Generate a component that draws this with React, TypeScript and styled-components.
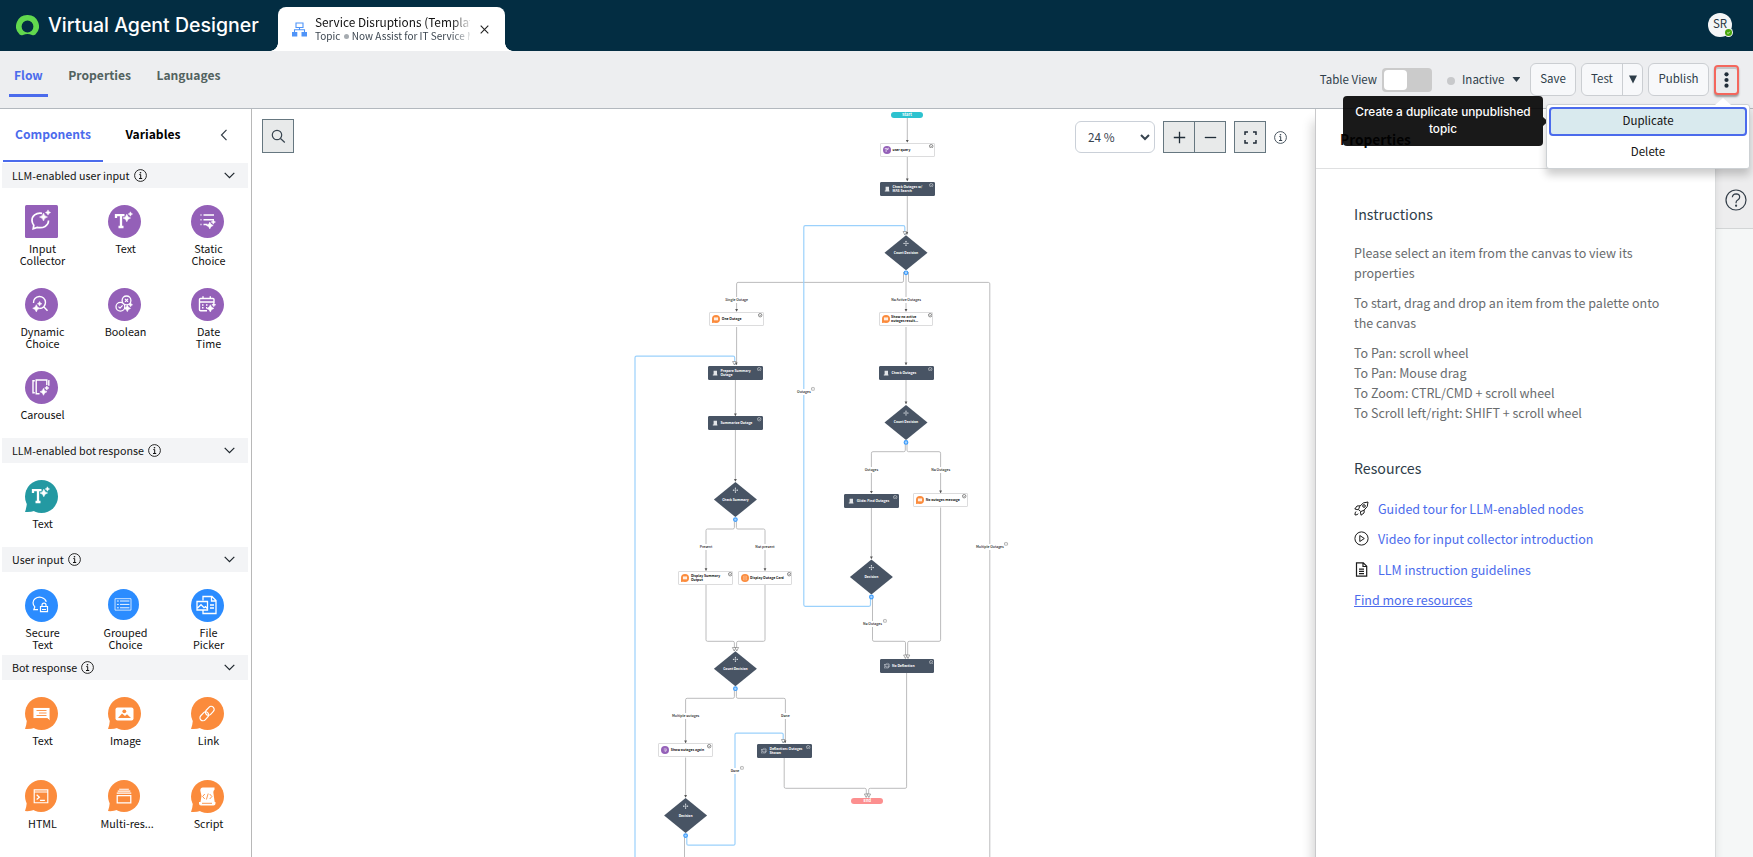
import type { ReactNode } from 'react';
import styled, { createGlobalStyle } from 'styled-components';

type Kind = 'round' | 'square' | 'bubble';
type PaletteEntry = { label: string; glyph: string; size?: number };
type CardData = { x: number; y: number; text: string; dark?: boolean; icon: 'query' | 'message' | 'script' | 'topic' | 'card' | 'choice' };

const purple = '#9460b8';
const teal = '#2399a2';
const blue = '#2b8cff';
const orange = '#fb8b3c';

const sections: { title: string; color: string; kind: Kind; items: PaletteEntry[] }[] = [
  {
    title: 'LLM-enabled user input', color: purple, kind: 'round',
    items: [
      { label: 'Input Collector', glyph: 'collector' },
      { label: 'Text', glyph: 'llmText' },
      { label: 'Static Choice', glyph: 'static' },
      { label: 'Dynamic Choice', glyph: 'dynamic' },
      { label: 'Boolean', glyph: 'boolean' },
      { label: 'Date Time', glyph: 'date' },
      { label: 'Carousel', glyph: 'carousel' },
    ],
  },
  { title: 'LLM-enabled bot response', color: teal, kind: 'bubble', items: [{ label: 'Text', glyph: 'llmText' }] },
  {
    title: 'User input', color: blue, kind: 'round',
    items: [
      { label: 'Secure Text', glyph: 'secure' },
      { label: 'Grouped Choice', glyph: 'grouped', size: 31 },
      { label: 'File Picker', glyph: 'file' },
    ],
  },
  {
    title: 'Bot response', color: orange, kind: 'bubble',
    items: [
      { label: 'Text', glyph: 'message' },
      { label: 'Image', glyph: 'image' },
      { label: 'Link', glyph: 'link' },
      { label: 'HTML', glyph: 'html', size: 32 },
      { label: 'Multi\u2011res...', glyph: 'multi', size: 32 },
      { label: 'Script', glyph: 'script' },
    ],
  },
];

const cards: CardData[] = [
  { x: 880, y: 143, text: 'user query', icon: 'query' },
  { x: 880, y: 182, text: 'Check Outages w/\nMAS Search', icon: 'script', dark: true },
  { x: 709.3, y: 312.4, text: 'One Outage', icon: 'message' },
  { x: 878.6, y: 312.4, text: 'Show no active\noutages result...', icon: 'message' },
  { x: 708, y: 365.7, text: 'Prepare Summary\nOutage', icon: 'script', dark: true },
  { x: 879, y: 365.7, text: 'Check Outages', icon: 'script', dark: true },
  { x: 708, y: 416.3, text: 'Summarize Outage', icon: 'script', dark: true },
  { x: 844.2, y: 493.7, text: 'Glide: Find Outages', icon: 'script', dark: true },
  { x: 913.3, y: 493.4, text: 'No outages message', icon: 'message' },
  { x: 678.4, y: 571.2, text: 'Display Summary\nOutput', icon: 'message' },
  { x: 737.5, y: 571.2, text: 'Display Outage Card', icon: 'card' },
  { x: 879.5, y: 658.8, text: 'No Deflection', icon: 'topic', dark: true },
  { x: 658.3, y: 743.3, text: 'Show outages again', icon: 'choice' },
  { x: 757, y: 743.8, text: 'Deflection: Outages\nShown', icon: 'topic', dark: true },
];

const decisions = [
  { x: 906, y: 252.8, text: 'Count Decision' },
  { x: 906, y: 422.4, text: 'Count Decision' },
  { x: 735.4, y: 499.6, text: 'Check Summary' },
  { x: 871.4, y: 577, text: 'Decision' },
  { x: 735.4, y: 668.7, text: 'Count Decision' },
  { x: 685.6, y: 815.6, text: 'Decision' },
];

const edgeLabels = [
  { x: 736.6, y: 300, text: 'Single Outage' },
  { x: 906, y: 300, text: 'No Active Outages' },
  { x: 803.8, y: 391.8, text: 'Outages', icon: 813 },
  { x: 871.4, y: 469.8, text: 'Outages' },
  { x: 940.6, y: 469.8, text: 'No Outages' },
  { x: 706, y: 546.8, text: 'Present' },
  { x: 765, y: 546.8, text: 'Not present' },
  { x: 989.8, y: 546.8, text: 'Multiple Outages', icon: 1006.3 },
  { x: 872.4, y: 623.9, text: 'No Outages', icon: 885 },
  { x: 685.6, y: 715.8, text: 'Multiple outages' },
  { x: 785.3, y: 715.8, text: 'Done' },
  { x: 735, y: 770.8, text: 'Done', icon: 741.7 },
];

const grayEdges = [
  'M907.3 118V142', 'M907.3 157V181', 'M907.3 196V234.5',
  'M903.5 272V280.9Q903.5 282.4 902 282.4H738.1Q736.6 282.4 736.6 283.9V311',
  'M906 272V311',
  'M908.5 272V280.9Q908.5 282.4 910 282.4H988.3Q989.8 282.4 989.8 283.9V857',
  'M736.6 327V365', 'M906 327V365', 'M906 379.5V404', 'M735.4 379.5V416', 'M735.4 430V481',
  'M905.3 443V450.2Q905.3 451.7 903.8 451.7H872.9Q871.4 451.7 871.4 453.2V493',
  'M907 443V450.2Q907 451.7 908.5 451.7H939.1Q940.6 451.7 940.6 453.2V493',
  'M871.4 507.5V558.5',
  'M734.4 520V527.5Q734.4 529 732.9 529H707.5Q706 529 706 530.5V570.5',
  'M736.4 520V527.5Q736.4 529 737.9 529H763.5Q765 529 765 530.5V570.5',
  'M706 585V639.8Q706 641.3 707.5 641.3H732.9Q734.4 641.3 734.4 642.8V651',
  'M765 585V639.8Q765 641.3 763.5 641.3H738.1Q736.6 641.3 736.6 642.8V651',
  'M872.5 597V639.8Q872.5 641.3 874 641.3H904Q905.5 641.3 905.5 642.8V658',
  'M940.6 507.5V639.8Q940.6 641.3 939.1 641.3H909.2Q907.7 641.3 907.7 642.8V658',
  'M734.4 689V696.8Q734.4 698.3 732.9 698.3H687.1Q685.6 698.3 685.6 699.8V743',
  'M736.4 689V696.8Q736.4 698.3 737.9 698.3H783.9Q785.4 698.3 785.4 699.8V743',
  'M685.6 757.5V797',
  'M784.2 757.5V786.8Q784.2 788.3 785.7 788.3H864.8Q866.3 788.3 866.3 789.8V797',
  'M906.6 672.5V786.8Q906.6 788.3 905.1 788.3H870.2Q868.7 788.3 868.7 789.8V797',
  'M684.5 836V857',
];

const blueEdges = [
  'M870.5 597V604.8Q870.5 606.3 869 606.3H805.3Q803.8 606.3 803.8 604.8V227.2Q803.8 225.7 805.3 225.7H903.3Q904.8 225.7 904.8 227.2V235',
  'M635 857V357.8Q635 356.2 636.5 356.2H733.2Q734.7 356.2 734.7 357.7V365',
  'M686.8 836V843.7Q686.8 845.2 688.3 845.2H733.5Q735 845.2 735 843.7V734.6Q735 733.1 736.5 733.1H781.7Q783.2 733.1 783.2 734.6V743',
];

const arrows: [number, number][] = [
  [907.3, 142.3], [907.3, 181], [906.8, 234.5], [736.6, 311.5], [906, 311.5], [736.2, 365], [906, 365], [906, 404],
  [735.4, 416], [735.4, 481.5], [871.4, 493.3], [940.6, 493], [871.4, 559], [706, 570.7], [765, 570.7],
  [685.6, 743], [785, 743], [685.6, 797.5],
];

const openArrows: [number, number][] = [
  [904.9, 235], [734.4, 365], [734.2, 651], [736.8, 651], [905.4, 658.5], [908, 658.5], [783.2, 743], [866.2, 797.5], [868.8, 797.5],
];

const Sparkle = ({ x, y, r }: { x: number; y: number; r: number }) => (
  <path
    d={`M${x} ${y - r}Q${x + r * 0.18} ${y - r * 0.18} ${x + r} ${y}Q${x + r * 0.18} ${y + r * 0.18} ${x} ${y + r}Q${x - r * 0.18} ${y + r * 0.18} ${x - r} ${y}Q${x - r * 0.18} ${y - r * 0.18} ${x} ${y - r}Z`}
    fill="#fff" stroke="#fff" strokeWidth={0.5}
  />
);

const glyphs: Record<string, ReactNode> = {
  collector: <>
    <path d="M17 8.3C11 7.3 6.8 11 7 15.6c.1 2 .8 3.4 1.8 4.6l-.6 3.6 4-1.4c6 1.2 11.3-1.6 11.3-6.8" strokeWidth="1.7" />
    <Sparkle x={18.5} y={12} r={4} /><Sparkle x={23} y={7.5} r={2.6} />
  </>,
  llmText: <>
    <path d="M8 13V10.200h8.500M13 10.200v11.600M10.500 22h5" strokeWidth="2.300" />
    <Sparkle x={18.8} y={13} r={3.8} /><Sparkle x={22.4} y={9} r={2.2} />
  </>,
  static: <>
    <path d="M9.500 9.900h1M9.500 14.800h1M9.500 19.600h1M12.500 9.900h10.500M12.500 14.800h10.500M12.500 19.600h4" strokeWidth="1.500" />
    <Sparkle x={18.8} y={20.5} r={3.4} /><Sparkle x={22.3} y={17} r={2.2} />
  </>,
  dynamic: <>
    <path d="M8.500 15a6 6 0 1 1 6 5.500M18.500 18.500l4 4.300" strokeWidth="1.400" />
    <Sparkle x={11.3} y={20.3} r={3.6} /><Sparkle x={14.6} y={15.8} r={2.3} />
  </>,
  boolean: <>
    <circle cx="18.500" cy="12.400" r="4.400" strokeWidth="1.300" />
    <circle cx="12.400" cy="18.700" r="4.400" strokeWidth="1.300" />
    <path d="M17 10.900l3 3M20 10.900l-3 3M10.500 18.700l1.500 1.500 2.600-2.800" strokeWidth="1.200" />
    <Sparkle x={19.3} y={20.4} r={3.3} /><Sparkle x={22.6} y={16.8} r={2} />
  </>,
  date: <>
    <path d="M16 22.800h-6.500q-1 0-1-1V11.500q0-1 1-1h12.500q1 0 1 1V15M8.500 14h14M12 8.300v3M19.300 8.300v3" strokeWidth="1.400" />
    <path d="M11 17h1.500M15 17h1.500M11 19.800h1.500M15 19.800h1" strokeWidth="1.500" />
    <Sparkle x={19.3} y={20.4} r={3.6} /><Sparkle x={22.8} y={16.8} r={2} />
  </>,
  carousel: <>
    <path d="M14.500 22.800h-3.300V9h10.600v5M9.800 9.800H8v12h1.800M23.300 9.800h.5v5" strokeWidth="1.400" />
    <Sparkle x={18.5} y={20.8} r={3.5} /><Sparkle x={21.8} y={17} r={2.2} />
  </>,
  secure: <>
    <path d="M13 20.700H8.800l1-2.800C7.500 15.500 7.300 12 10 9.800c4-3 10-1.500 11.300 3" strokeWidth="1.200" />
    <path d="M15.500 17.500h7v5.200h-7zM17 17.500v-1.400a2 2 0 0 1 4 0v1.400M17 20.500h4" strokeWidth="1.200" />
  </>,
  grouped: <>
    <path d="M7.500 10.300h17v12.200h-17z" strokeWidth=".8" />
    <path d="M9.500 12.800h2M9.500 16.400h2M9.500 20h2M12.800 12.800h10M12.800 16.400h10M12.800 20h10" strokeWidth="1" />
  </>,
  file: <>
    <path d="M12 11.500V7.500h9l4 4v13H12v-3.500M20.500 7.500v4.500H25M19 16h4M19 19h4" strokeWidth="1.300" />
    <path d="M6 12.500h10.500v8.500H6zM6.500 19l3.500-3.300 3 3 1.500-1 2 2" strokeWidth="1.300" />
  </>,
  message: <path d="M8 10.500h17v13.500l-2.500-2.500H8zM11.500 13.500h10M14 16h7.500M11.500 18.500h10" fill="#fff" stroke={orange} strokeWidth=".9" />,
  image: <>
    <rect x="7.500" y="10.500" width="18" height="13" rx="2" fill="#fff" stroke="none" />
    <path d="M10 21l4-4.500 3 2.500 2-1.800 4 3.800z" fill={orange} stroke="none" />
    <circle cx="16.300" cy="14.300" r="1.900" fill={orange} stroke="none" />
  </>,
  link: <>
    <rect x="-3" y="-5" width="6" height="10" rx="3" transform="translate(18.800 13.800) rotate(43)" strokeWidth="1.200" />
    <rect x="-3" y="-5" width="6" height="10" rx="3" transform="translate(13.300 19.300) rotate(43)" strokeWidth="1.200" />
  </>,
  html: <>
    <path d="M9.500 10.200h14v13.300h-14zM9.500 12.400h14" strokeWidth="1.200" />
    <path d="M12 15.200l2.800 2.500-2.800 2.500M15.500 21h5" strokeWidth="1.300" />
  </>,
  multi: <>
    <path d="M9.500 16h14v7.500h-14z" strokeWidth="1.300" />
    <path d="M9 13.500h15M10 11.500h13M11.500 9.500h10" strokeWidth="1.200" />
  </>,
  script: <>
    <path d="M9.300 10.500c0-2 1-3 2.500-3h11.700v2.200c-1.200.8-1.300 2.300-1 4l1.200 8.300h.8v1.500q0 2-2 2H10q-2 0-2-2V22h1.500l1-6z" fill="#fff" stroke="none" />
    <path d="M13.800 14l-2.200 2.500 2.200 2.500M18.700 14l2.200 2.500-2.200 2.500M17.200 13.500l-1.800 6M11 23.300h10" stroke={orange} strokeWidth=".9" />
  </>,
};

const PaletteIcon = ({ kind, color, glyph, size = 33 }: { kind: Kind; color: string; glyph: string; size?: number }) => (
  <svg width={size} height={size} viewBox="0 0 33 33">
    {kind === 'square' ? <rect width="33" height="33" rx="1.500" fill={color} /> : <circle cx="16.500" cy="16.500" r="16.500" fill={color} />}
    {kind === 'bubble' && <path d="M2 22.500Q1.500 28 0 32q5 .5 10-1.200z" fill={color} />}
    <g fill="none" stroke="#fff">{glyphs[glyph]}</g>
  </svg>
);

const InfoIcon = ({ size = 13 }: { size?: number }) => (
  <svg width={size} height={size} viewBox="0 0 13 13" fill="none" stroke="currentColor">
    <circle cx="6.500" cy="6.500" r="5.900" strokeWidth=".9" />
    <path d="M5.300 5.600h1.400v3.800M5 9.500h3.200" strokeWidth="1" />
    <circle cx="6.500" cy="3.700" r=".8" fill="currentColor" stroke="none" />
  </svg>
);

const NodeIcon = ({ icon }: { icon: CardData['icon'] }) => {
  if (icon === 'script') {
    return (
      <svg width="8" height="8" viewBox="0 0 8 8"><path d="M2.600 1.800h3.400v3.700h.4v1H1.800v-1h.8z" fill="#fff" opacity=".85" /></svg>
    );
  }
  if (icon === 'topic') {
    return (
      <svg width="8" height="8" viewBox="0 0 8 8" fill="none" stroke="#d5dae0" strokeWidth=".4">
        <rect x="1.500" y="2.500" width="4" height="3.500" /><circle cx="4.500" cy="3.500" r="2.200" /><path d="M2 4.300h4.500" />
      </svg>
    );
  }
  const violet = icon === 'query' || icon === 'choice';
  return (
    <svg width="8" height="8" viewBox="0 0 33 33">
      <circle cx="16.500" cy="16.500" r="16.500" fill={violet ? purple : orange} />
      {icon === 'message' && <path d="M.5 17L0 33q8-.5 10-3z" fill={orange} />}
      <g fill="none" stroke="#fff">
        {icon === 'query' && glyphs.llmText}
        {icon === 'choice' && glyphs.static}
        {icon === 'message' && <rect x="8" y="10" width="17" height="12" fill="#fff" opacity=".85" stroke="none" />}
        {icon === 'card' && <path d="M10 9h13v15H10zM13 14h7M13 18h7" opacity=".8" strokeWidth="1.500" />}
      </g>
    </svg>
  );
};

const MiniMenu = () => (
  <svg width="4.400" height="4.400" viewBox="0 0 5 5" fill="none" stroke="currentColor" strokeWidth=".5">
    <circle cx="2.500" cy="2.500" r="2" /><path d="M1.500 2l1 1 1-1" />
  </svg>
);

const App = () => (
  <Page>
    <GlobalStyle />
    <Header>
      <Brand>
        <svg width="23" height="21" viewBox="0 0 23 21">
          <path d="M11.500 0A11.300 11.300 0 0 0 3.600 19.500q1.700 1.400 3.400.4 4.500-2 9 0 1.700 1 3.400-.4A11.300 11.300 0 0 0 11.500 0zm0 5.600a5.900 5.900 0 0 1 0 11.800 5.900 5.900 0 0 1 0-11.800z" fill="#62d84e" />
        </svg>
        <BrandName>Virtual Agent Designer</BrandName>
      </Brand>
      <OpenTab>
        <svg width="15" height="15" viewBox="0 0 15 15">
          <path d="M4 1h7v4.500H4zM7.500 5.500v2M2.500 10V7.800h10V10" fill="none" stroke="#4f94f8" strokeWidth="1.100" />
          <path d="M0 10h5.300v4.500H0zM9.500 10H15v4.500H9.500z" fill="#4f94f8" />
        </svg>
        <TabText>
          <TabTitle>Service Disruptions (Template)</TabTitle>
          <TabSub>Topic <SubDot /> Now Assist for IT Service Management</TabSub>
        </TabText>
        <svg width="9" height="9" viewBox="0 0 9 9" stroke="#222" strokeWidth="1.100"><path d="M.7.7l7.600 7.600M8.300.7L.7 8.300" /></svg>
      </OpenTab>
      <Avatar>SR
        <Presence><svg width="7" height="7" viewBox="0 0 7 7"><circle cx="3.500" cy="3.500" r="3.500" fill="#48a60c" /><path d="M2.200 3.700l1 .8 1.600-1.800" fill="none" stroke="#fff" strokeWidth=".8" /></svg></Presence>
      </Avatar>
    </Header>

    <Toolbar>
      <MainTabs>
        <MainTab $active>Flow</MainTab>
        <MainTab>Properties</MainTab>
        <MainTab>Languages</MainTab>
      </MainTabs>
      <Actions>
        <ActionText>Table View</ActionText>
        <Toggle><Knob /></Toggle>
        <Status><StatusDot /><ActionText>Inactive</ActionText><Caret /></Status>
        <Button $w={46}>Save</Button>
        <SplitButton><SplitMain>Test</SplitMain><SplitArrow>
          <svg width="8" height="9" viewBox="0 0 8 9"><path d="M0 .5h8L4 8.500z" fill="#2e3d49" /></svg>
        </SplitArrow></SplitButton>
        <Button $w={61}>Publish</Button>
        <MoreWrap>
          <MoreButton>
            <svg width="5" height="16" viewBox="0 0 5 16" fill="#202d38"><circle cx="2.500" cy="2.300" r="2.100" /><circle cx="2.500" cy="8" r="2.100" /><circle cx="2.500" cy="13.700" r="2.100" /></svg>
          </MoreButton>
          <Menu>
            <MenuItem $active>Duplicate</MenuItem>
            <MenuItem>Delete</MenuItem>
            <Tooltip>Create a duplicate unpublished topic</Tooltip>
          </Menu>
        </MoreWrap>
      </Actions>
    </Toolbar>

    <Body>
      <Sidebar>
        <SideTabs>
          <SideTab $active>Components</SideTab>
          <SideTab>Variables</SideTab>
          <Collapse><svg width="8" height="12" viewBox="0 0 8 12" fill="none" stroke="#333d47" strokeWidth="1.200"><path d="M6.500.8L1.500 6l5 5.200" /></svg></Collapse>
        </SideTabs>
        {sections.map(s => (
          <Section key={s.title}>
            <SectionHead>
              {s.title}<InfoIcon />
              <Chevron><svg width="11" height="7" viewBox="0 0 11 7" fill="none" stroke="#1d252c" strokeWidth="1.200"><path d="M.7.8l4.800 4.800L10.300.8" /></svg></Chevron>
            </SectionHead>
            <PaletteGrid>
              {s.items.map(i => (
                <PaletteItem key={i.label}>
                  <IconSlot><PaletteIcon kind={i.glyph === 'collector' ? 'square' : s.kind} color={s.color} glyph={i.glyph} size={i.size} /></IconSlot>
                  <ItemLabel>{i.label}</ItemLabel>
                </PaletteItem>
              ))}
            </PaletteGrid>
          </Section>
        ))}
      </Sidebar>

      <Canvas>
        <CanvasBar>
          <ToolButton $w={32} $h={34}>
            <svg width="15" height="15" viewBox="0 0 15 15" fill="none" stroke="#37444f" strokeWidth="1.200"><circle cx="6" cy="6" r="4.700" /><path d="M9.500 9.500l4.300 4" /></svg>
          </ToolButton>
          <ZoomTools>
            <ZoomSelect>24 %<svg width="10" height="7" viewBox="0 0 10 7" fill="none" stroke="#37444f" strokeWidth="2"><path d="M1 1l4 4 4-4" /></svg></ZoomSelect>
            <ButtonPair>
              <ToolButton $w={32} $h={32}><svg width="13" height="13" viewBox="0 0 13 13" stroke="#202d38" strokeWidth="1.300"><path d="M.8 6.500h11.400M6.500.8v11.400" /></svg></ToolButton>
              <ToolButton $w={32} $h={32}><svg width="13" height="13" viewBox="0 0 13 13" stroke="#202d38" strokeWidth="1.300"><path d="M.8 6.500h11.400" /></svg></ToolButton>
            </ButtonPair>
            <ToolButton $w={32} $h={32}>
              <svg width="13" height="13" viewBox="0 0 13 13" fill="none" stroke="#202d38" strokeWidth="1.500"><path d="M1 4V1h3M9 1h3v3M12 9v3H9M4 12H1V9" /></svg>
            </ToolButton>
            <InfoIcon />
          </ZoomTools>
        </CanvasBar>

        <Diagram>
          <EdgeLayer viewBox="252 109 1063 748" width="1063" height="748">
            <g fill="none" stroke="#b4b4b6" strokeWidth=".9">{grayEdges.map(d => <path key={d} d={d} />)}</g>
            <g fill="none" stroke="#9bd1fc" strokeWidth="1.200">{blueEdges.map(d => <path key={d} d={d} />)}</g>
            <g fill="#555">{arrows.map(([x, y]) => <path key={`${x}-${y}`} d={`M${x - 1.4} ${y - 2.4}h2.800l-1.400 2.700z`} />)}</g>
            <g fill="#fff" stroke="#777" strokeWidth=".6">{openArrows.map(([x, y]) => <path key={`${x}-${y}`} d={`M${x - 1.8} ${y - 3.5}h3.600l-1.800 3.500z`} />)}</g>
            {decisions.map(({ x, y }) => (
              <g key={`${x}-${y}`}>
                <path d={`M${x} ${y - 17.5}l21.500 17.500-21.500 17.500-21.500-17.500z`} fill="#485464" />
                <path d={`M${x} ${y - 11.4}v4M${x - 2} ${y - 9.4}h4`} stroke="#e4e8ec" strokeWidth=".5" />
                <g fill="#e4e8ec">
                  <circle cx={x} cy={y - 11.4} r=".6" /><circle cx={x} cy={y - 7.4} r=".6" />
                  <circle cx={x - 2} cy={y - 9.4} r=".6" /><circle cx={x + 2} cy={y - 9.4} r=".6" />
                </g>
                <circle cx={x} cy={y + 20} r="1.800" fill="#a9d4ff" stroke="#3f9dfa" strokeWidth="1.200" />
              </g>
            ))}
          </EdgeLayer>
          <Terminal $x={891} $y={112} $color="#2dc2cf">Start</Terminal>
          {edgeLabels.map(l => <EdgeLabel key={`${l.x}-${l.y}`} $x={l.x} $y={l.y}>{l.text}</EdgeLabel>)}
          {edgeLabels.filter(l => l.icon).map(l => <LabelMenu key={l.icon} $x={l.icon!} $y={l.y - 3}><MiniMenu /></LabelMenu>)}
          {cards.map(c => (
            <NodeCard key={`${c.x}-${c.y}`} $x={c.x} $y={c.y} $dark={c.dark}>
              <NodeIcon icon={c.icon} />
              <NodeText>{c.text}</NodeText>
              <CardMenu><MiniMenu /></CardMenu>
            </NodeCard>
          ))}
          {decisions.map(d => <DecisionText key={`${d.x}-${d.y}`} $x={d.x} $y={d.y}>{d.text}</DecisionText>)}
          <Terminal $x={851.4} $y={798} $color="#fc8f8f">End</Terminal>
        </Diagram>
      </Canvas>

      <PropertiesPanel>
        <PanelHead>Properties</PanelHead>
        <PanelBody>
          <PanelTitle>Instructions</PanelTitle>
          <Copy>Please select an item from the canvas to view its properties</Copy>
          <Copy>To start, drag and drop an item from the palette onto the canvas</Copy>
          <Copy>
            To Pan: scroll wheel<br />
            To Pan: Mouse drag<br />
            To Zoom: CTRL/CMD + scroll wheel<br />
            To Scroll left/right: SHIFT + scroll wheel
          </Copy>
          <PanelTitle $later>Resources</PanelTitle>
          <Resource>
            <svg width="15" height="15" viewBox="0 0 15 15" fill="none" stroke="#1c1c1c" strokeWidth="1">
              <path d="M14 1q-5-.3-8.200 4.200L4.500 8.500 6.800 10.600 10 9.200Q14.500 6 14 1zM6 4.800L3 5 .8 8l3.500.8M10.300 9.200L10 12l-3 2.200-.6-3.400M2 10.500Q.8 11.500 1 14q2.500 0 3.300-1.300" /><circle cx="10" cy="5" r="1.300" />
            </svg>
            Guided tour for LLM-enabled nodes
          </Resource>
          <Resource>
            <svg width="15" height="15" viewBox="0 0 15 15" fill="none" stroke="#1c1c1c" strokeWidth="1"><circle cx="7.500" cy="7.500" r="6.600" /><path d="M5.800 4.500l4.500 3-4.500 3z" /></svg>
            Video for input collector introduction
          </Resource>
          <Resource>
            <svg width="15" height="15" viewBox="0 0 15 15" fill="none" stroke="#1c1c1c" strokeWidth="1.200"><path d="M2.500.8h6.800l3.400 3.400v10H2.500zM9 .8v3.700h3.700M5 7.200h5M5 9.400h5M5 11.600h5" /></svg>
            LLM instruction guidelines
          </Resource>
          <MoreLink>Find more resources</MoreLink>
        </PanelBody>
      </PropertiesPanel>

      <Rail>
        <RailTab>
          <svg width="22" height="22" viewBox="0 0 22 22" fill="none" stroke="#333e49" strokeWidth="1.200">
            <circle cx="11" cy="11" r="10" /><path d="M7.300 8.300q.4-3.500 3.900-3.500 3.500.2 3.500 3.300 0 1.800-1.900 2.900-1.700 1-1.700 2.300v.9" /><circle cx="11.100" cy="16.700" r=".5" fill="#333e49" />
          </svg>
        </RailTab>
      </Rail>
    </Body>
  </Page>
);

const GlobalStyle = createGlobalStyle`
  * { box-sizing: border-box; }
  body {
    margin: 0;
    overflow: hidden;
    font-family: "Noto Sans CJK JP", "Noto Sans", sans-serif;
    color: #161b1c;
  }
  svg { display: block; flex-shrink: 0; }
`;

const Page = styled.div`
  display: flex;
  flex-direction: column;
  width: 1753px;
  height: 857px;
  background: #fff;
`;

const Header = styled.header`
  display: flex;
  height: 51px;
  background: #032d42;
`;

const Brand = styled.div`
  display: flex;
  align-items: center;
  gap: 9px;
  width: 278px;
  padding: 0 0 1px 16px;
`;

const BrandName = styled.div`
  font: 500 19.5px/24px Inter, sans-serif;
  color: #fff;
`;

const OpenTab = styled.div`
  position: relative;
  display: flex;
  align-items: center;
  width: 227px;
  margin-top: 7px;
  padding: 0 16px 0 14px;
  border-radius: 8px 8px 0 0;
  background: #fff;

  &::before, &::after {
    content: '';
    position: absolute;
    bottom: 0;
    width: 8px;
    height: 8px;
  }
  &::before {
    left: -8px;
    background: radial-gradient(circle at 0 0, transparent 7.5px, #fff 8px);
  }
  &::after {
    right: -8px;
    background: radial-gradient(circle at 100% 0, transparent 7.5px, #fff 8px);
  }
`;

const TabText = styled.div`
  width: 155px;
  margin: 0 10px 2px 8px;
  overflow: hidden;
  white-space: nowrap;
  mask-image: linear-gradient(90deg, #000 136px, transparent 158px);
`;

const TabTitle = styled.div`
  font-size: 11.85px;
  line-height: 14px;
  color: #111;
`;

const TabSub = styled.div`
  font-size: 10px;
  line-height: 13px;
  color: #3c4650;
`;

const SubDot = styled.span`
  display: inline-block;
  width: 5px;
  height: 5px;
  margin: 0 1px 1px;
  border-radius: 50%;
  background: #a6abb0;
`;

const Avatar = styled.div`
  position: relative;
  width: 24px;
  height: 24px;
  margin: 13px 21px 0 auto;
  border-radius: 50%;
  background: #f5f6f7;
  font-size: 11.5px;
  line-height: 20px;
  text-align: center;
  color: #2b3742;
`;

const Presence = styled.span`
  position: absolute;
  right: -1px;
  bottom: 0;
  padding: 1px;
  border-radius: 50%;
  background: #f5f6f7;
`;

const Toolbar = styled.div`
  display: flex;
  justify-content: space-between;
  height: 58px;
  border-bottom: 1px solid #b3b8be;
  background: #edeef0;
`;

const MainTabs = styled.nav`
  display: flex;
  height: 46px;
  gap: 15.5px;
  padding-left: 9px;
`;

const MainTab = styled.div<{ $active?: boolean }>`
  padding: 14px 5px 0;
  border-bottom: 3px solid ${p => (p.$active ? '#4b6bec' : 'transparent')};
  font-size: 12.1px;
  font-weight: 700;
  line-height: 20px;
  color: ${p => (p.$active ? '#4b6bec' : '#52625f')};
`;

const Actions = styled.div`
  display: flex;
  align-items: flex-start;
  padding: 12px 14px 0 0;
`;

const ActionText = styled.span`
  margin-top: 7px;
  font-size: 11.5px;
  line-height: 18px;
  color: #2e3d49;
`;

const Toggle = styled.div`
  width: 50px;
  height: 24px;
  margin: 5px 17px 0 5px;
  padding: 2px;
  border-radius: 4px;
  background: #cbcbcb;
`;

const Knob = styled.div`
  width: 23px;
  height: 20px;
  border-radius: 4px;
  background: #fff;
`;

const Status = styled.div`
  display: flex;
  width: 81px;
`;

const StatusDot = styled.span`
  width: 8px;
  height: 8px;
  margin: 14px 7px 0 -2px;
  border-radius: 50%;
  background: #c8c9cb;
`;

const Caret = styled.span`
  width: 8px;
  height: 5px;
  margin: 14px 0 0 8px;
  background: #2e3d49;
  clip-path: polygon(0 0, 100% 0, 50% 100%);
`;

const Button = styled.div<{ $w: number }>`
  width: ${p => p.$w}px;
  height: 33px;
  margin-right: 5px;
  border: 1px solid #cbced2;
  border-radius: 6px;
  background: #f7f8fa;
  font-size: 11.5px;
  line-height: 29px;
  text-align: center;
  color: #2e3d49;
`;

const SplitButton = styled(Button).attrs({ $w: 62 })`
  display: flex;
`;

const SplitMain = styled.div`
  width: 41px;
  border-right: 1px solid #cbced2;
`;

const SplitArrow = styled.div`
  display: flex;
  flex: 1;
  align-items: center;
  justify-content: center;
`;

const MoreWrap = styled.div`
  position: relative;
  padding-top: 2px;
`;

const MoreButton = styled.div`
  display: flex;
  align-items: center;
  justify-content: center;
  width: 25px;
  height: 30px;
  border: 2px solid #f4675d;
  border-radius: 4px;
  background: #e9ebed;
  box-shadow: 0 2px 2px #9c9c9c, inset 0 2px 0 #c3c5c7;
`;

const Menu = styled.div`
  position: absolute;
  z-index: 5;
  top: 41px;
  right: -11px;
  width: 204px;
  height: 65px;
  padding: 2px;
  border: 1px solid #cdd1d4;
  border-radius: 3px;
  background: #fff;
  box-shadow: 0 6px 9px rgba(0, 0, 0, 0.2);

  &::before {
    content: '';
    position: absolute;
    top: -7px;
    right: 18px;
    width: 16px;
    height: 7px;
    background: #fff;
    clip-path: polygon(50% 0, 100% 100%, 0 100%);
  }
`;

const MenuItem = styled.div<{ $active?: boolean }>`
  height: 29px;
  margin-bottom: 1px;
  border: 2px solid ${p => (p.$active ? '#4b6bec' : 'transparent')};
  border-radius: 4px;
  background: ${p => (p.$active ? '#d9eaee' : 'transparent')};
  font-size: 11.5px;
  line-height: ${p => (p.$active ? 23 : 24)}px;
  text-align: center;
  color: #111;
`;

const Tooltip = styled.div`
  position: absolute;
  top: -9px;
  right: 206px;
  width: 200px;
  height: 50px;
  padding: 8px 10px 0;
  border-radius: 4px;
  background: rgba(0, 0, 0, 0.9);
  font: 500 11.8px/17px Inter, sans-serif;
  text-align: center;
  color: #fff;

  &::after {
    content: '';
    position: absolute;
    top: 21px;
    right: -3px;
    width: 3px;
    height: 9px;
    background: #191919;
    clip-path: polygon(0 0, 100% 30%, 100% 70%, 0 100%);
  }
`;

const Body = styled.div`
  display: flex;
  flex: 1;
  min-height: 0;
`;

const Sidebar = styled.aside`
  width: 252px;
  padding-right: 3px;
  border-right: 1px solid #b8b8b8;
  overflow: hidden;
`;

const SideTabs = styled.div`
  display: flex;
  height: 53px;
  padding-left: 3px;
`;

const SideTab = styled.div<{ $active?: boolean }>`
  width: 100px;
  padding-top: 15px;
  border-bottom: 2px solid ${p => (p.$active ? '#4b6bec' : 'transparent')};
  font-size: 12.1px;
  font-weight: 700;
  line-height: 20px;
  text-align: center;
  color: ${p => (p.$active ? '#4b6bec' : '#000')};
`;

const Collapse = styled.div`
  padding: 20px 0 0 17px;
`;

const Section = styled.section`
  padding-top: 1px;

  &:last-child {
    padding-top: 0;
  }
`;

const SectionHead = styled.div`
  display: flex;
  align-items: center;
  gap: 4px;
  height: 25px;
  margin-left: 2px;
  padding: 0 13px 0 10px;
  background: #f3f4f6;
  font-size: 10.7px;
  color: #111;
`;

const Chevron = styled.span`
  margin-left: auto;
`;

const PaletteGrid = styled.div`
  display: grid;
  grid-template-columns: repeat(3, 83px);
  grid-auto-rows: 83px;
`;

const PaletteItem = styled.div`
  padding-top: 17px;
`;

const IconSlot = styled.div`
  height: 37px;
  padding-left: 25px;
`;

const ItemLabel = styled.div`
  width: 50px;
  margin-left: 17.5px;
  font-size: 10.8px;
  line-height: 12px;
  text-align: center;
  color: #111;
`;

const Canvas = styled.main`
  position: relative;
  width: 1063px;
  overflow: hidden;
`;

const CanvasBar = styled.div`
  position: relative;
  z-index: 1;
  display: flex;
  justify-content: space-between;
  padding: 10px 28px 0 10px;
`;

const ToolButton = styled.div<{ $w: number; $h: number }>`
  display: flex;
  align-items: center;
  justify-content: center;
  width: ${p => p.$w}px;
  height: ${p => p.$h}px;
  border: 1px solid #667780;
  background: #e8eaea;
`;

const ZoomTools = styled.div`
  display: flex;
  align-items: center;
  gap: 8px;
  height: 32px;
  margin-top: 2px;
  color: #37444f;
`;

const ZoomSelect = styled.div`
  display: flex;
  align-items: center;
  justify-content: space-between;
  width: 80px;
  height: 32px;
  padding: 0 4px 0 12px;
  border: 1px solid #cad0d8;
  border-radius: 6px;
  font-size: 11.8px;
  line-height: 30px;
`;

const ButtonPair = styled.div`
  display: flex;

  & > :last-child {
    margin-left: -1px;
  }
`;

const Diagram = styled.div`
  position: absolute;
  inset: 0;
`;

const EdgeLayer = styled.svg`
  position: absolute;
  inset: 0;
`;

// node positions are given in page space, the canvas starts at 252, 109
const Placed = styled.div<{ $x: number; $y: number }>`
  position: absolute;
  left: ${p => p.$x - 252}px;
  top: ${p => p.$y - 109}px;
`;

const Terminal = styled(Placed)<{ $color: string }>`
  width: 32px;
  height: 6px;
  border-radius: 3px;
  background: ${p => p.$color};
  font-size: 4px;
  font-weight: 700;
  line-height: 5px;
  text-align: center;
  color: #fff;
`;

const EdgeLabel = styled(Placed)`
  padding: 1px 0;
  transform: translate(-50%, -50%);
  background: #fff;
  font-size: 3.45px;
  font-weight: 500;
  line-height: 4px;
  white-space: nowrap;
  color: #111;
`;

const LabelMenu = styled(Placed)`
  transform: translate(-50%, -50%);
  color: #666;
`;

const NodeCard = styled(Placed)<{ $dark?: boolean }>`
  display: flex;
  align-items: center;
  gap: 1.5px;
  width: 54.5px;
  height: 14px;
  padding-left: 2px;
  border: 1px solid ${p => (p.$dark ? '#485464' : '#dcdcdd')};
  border-radius: 1px;
  background: ${p => (p.$dark ? '#485464' : '#fff')};
  color: ${p => (p.$dark ? '#fff' : '#111')};
`;

const NodeText = styled.div`
  font-size: 3.4px;
  font-weight: 700;
  line-height: 3.9px;
  white-space: pre;
`;

const CardMenu = styled.div`
  position: absolute;
  top: 0;
  right: 0;
`;

const DecisionText = styled(Placed)`
  transform: translate(-50%, -50%);
  font-size: 3.3px;
  font-weight: 700;
  line-height: 4px;
  white-space: nowrap;
  color: #fff;
`;

const PropertiesPanel = styled.aside`
  z-index: 2;
  width: 401px;
  border-left: 1px solid #c9c9cb;
  border-right: 1px solid #d9dbdc;
  background: #fff;
  box-shadow: -3px 12px 10px rgba(0, 0, 0, 0.16);
`;

const PanelHead = styled.div`
  height: 60px;
  padding: 20px 24px 0;
  border-bottom: 1px solid #dfe0e1;
  font-size: 13.7px;
  font-weight: 700;
  line-height: 20px;
  color: #111;
`;

const PanelBody = styled.div`
  padding: 35px 40px 0 38px;
`;

const PanelTitle = styled.div<{ $later?: boolean }>`
  margin: ${p => (p.$later ? '35px 0 20px' : '0 0 19px')};
  font-size: 14.2px;
  line-height: 20px;
  color: #2e3d49;
`;

const Copy = styled.p`
  margin: 0 0 10px;
  font-size: 12.5px;
  line-height: 20px;
  color: #696c6e;
`;

const Resource = styled.div`
  display: flex;
  align-items: center;
  gap: 9px;
  height: 20px;
  margin-bottom: 10.5px;
  font-size: 12.5px;
  color: #4b6bec;
`;

const MoreLink = styled.a`
  display: block;
  font-size: 12.5px;
  line-height: 20px;
  text-decoration: underline;
  color: #4b6bec;
`;

const Rail = styled.aside`
  z-index: 1;
  flex: 1;
  background: #f5f7f7;
`;

const RailTab = styled.div`
  display: flex;
  justify-content: center;
  height: 120px;
  padding: 80px 0 0 3px;
  border-bottom: 1px solid #d3d5d6;
  background: #ededee;
`;

export default App;
